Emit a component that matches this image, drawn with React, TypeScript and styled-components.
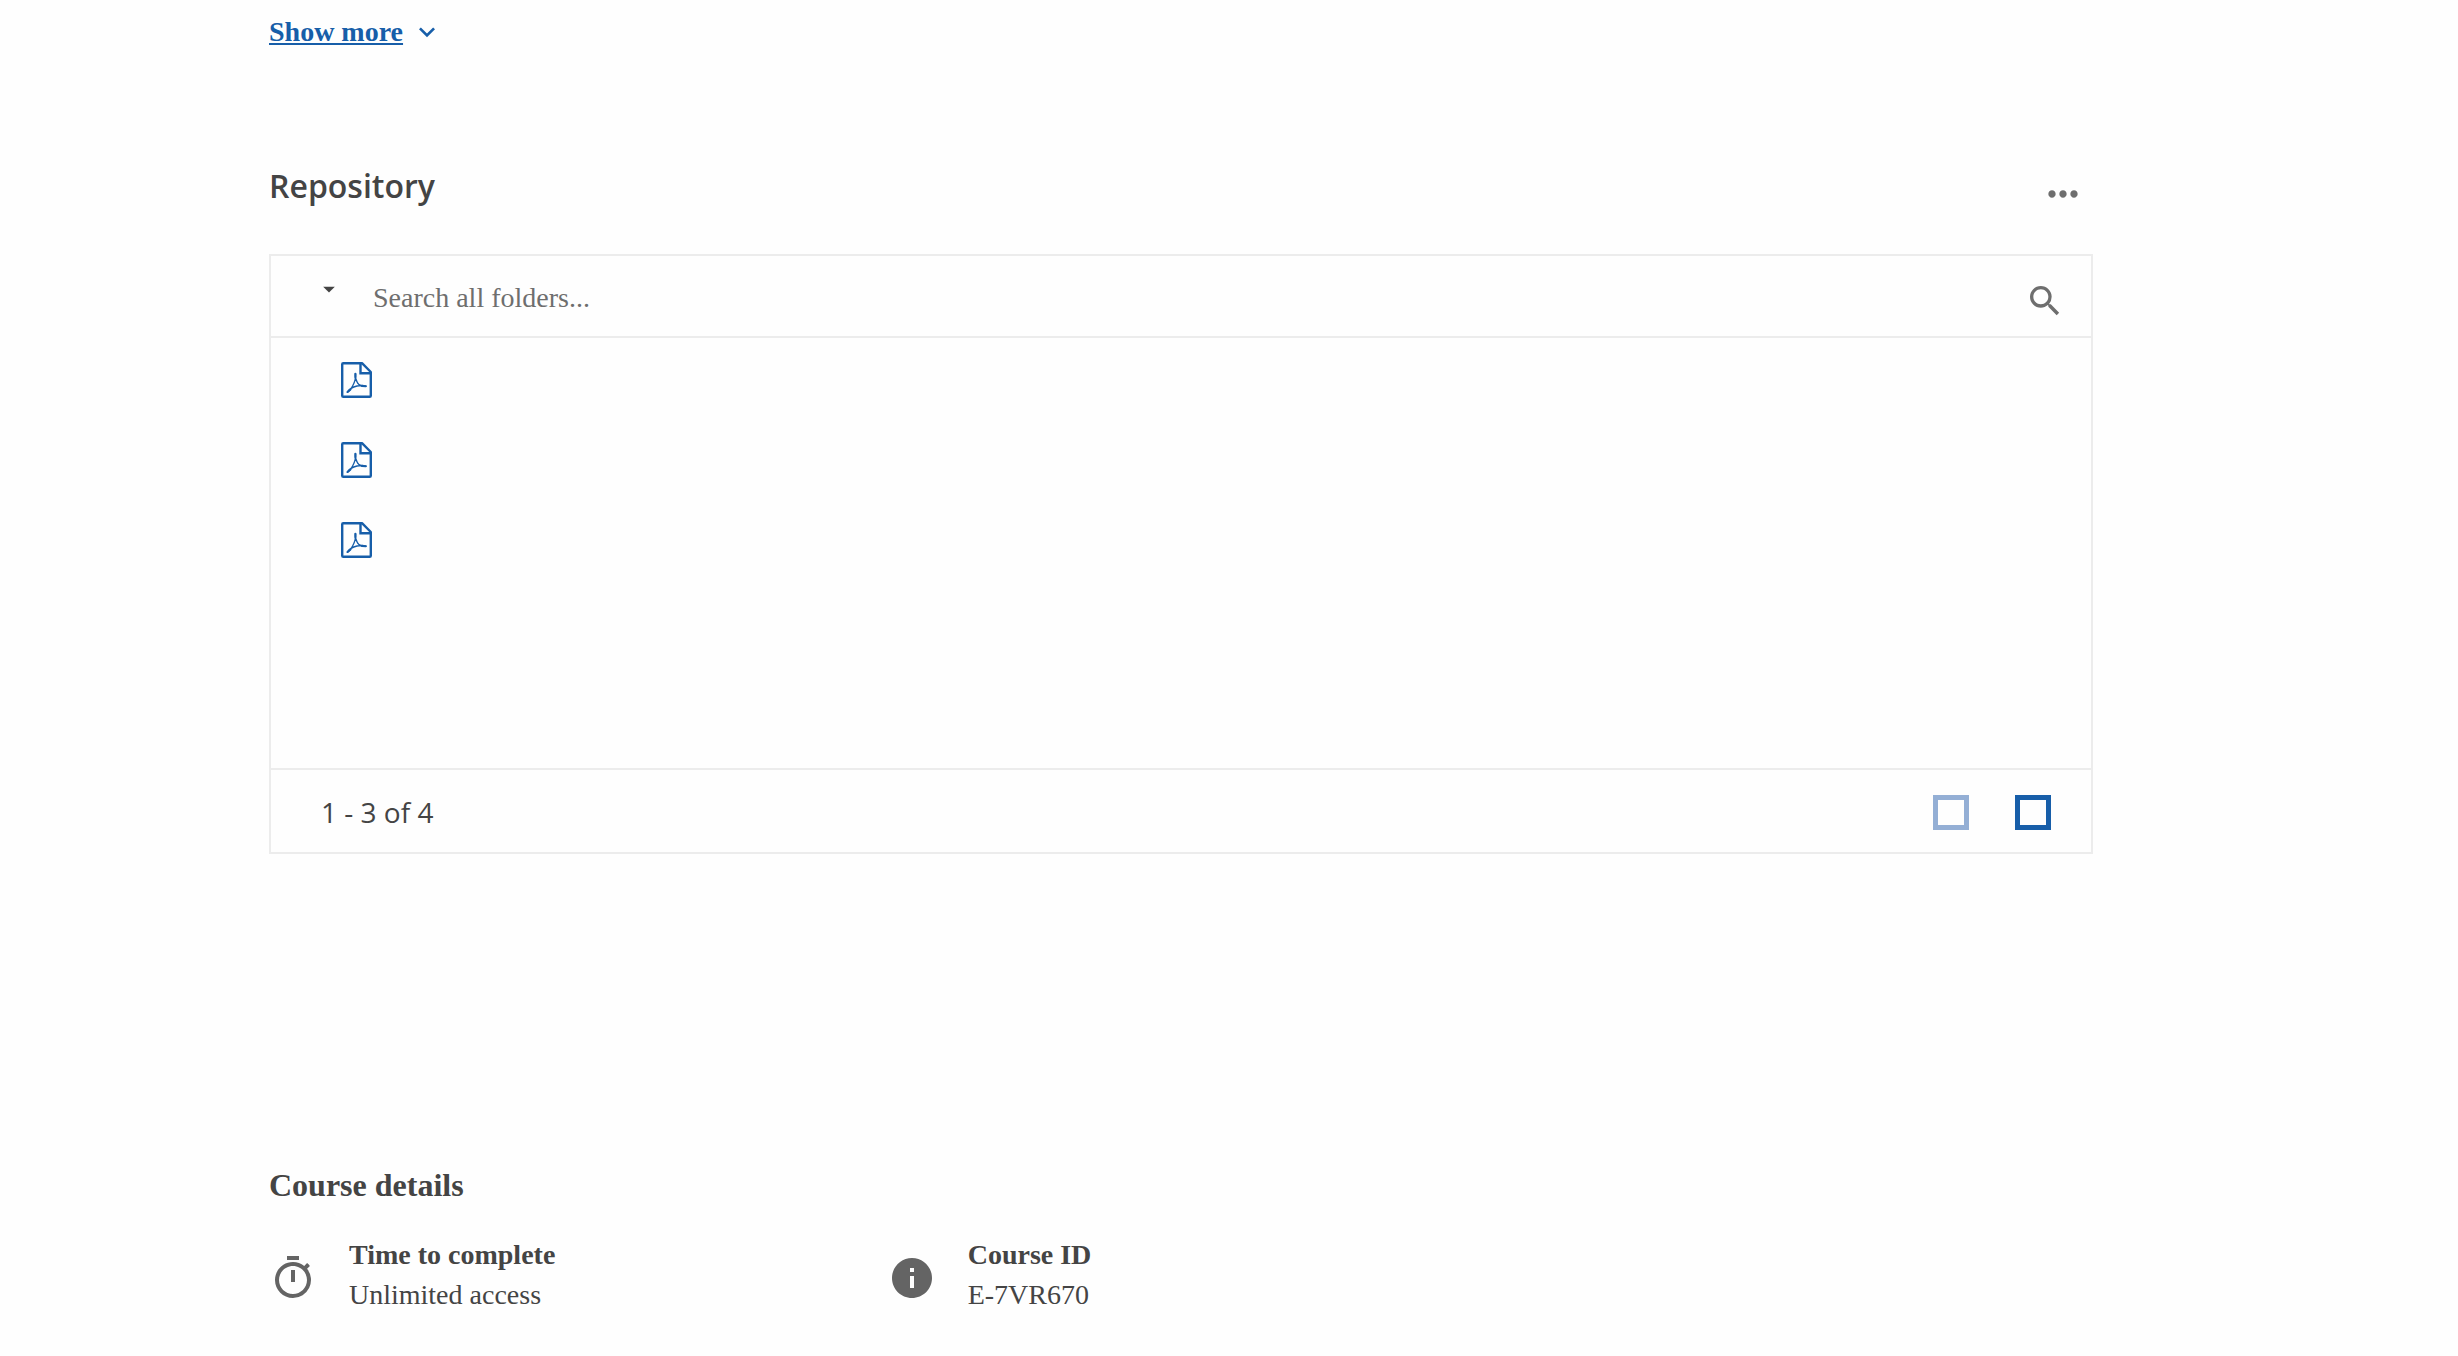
import React from 'react';
import styled, { createGlobalStyle } from 'styled-components';

const serif = '"Liberation Serif", "Times New Roman", serif';
const sans = '"Open Sans", "Noto Sans", sans-serif';
const ink = '#444444';
const muted = '#6e6e6e';
const blue = '#175ea9';
const line = '#ececec';

const GlobalStyle = createGlobalStyle`
  *, *::before, *::after { box-sizing: border-box; }
  body { margin: 0; background: #fefefe; color: ${ink}; font: 28px/40px ${serif}; }
  svg { display: block; }
`;

const Page = styled.main`
  padding: 12px 365px 32px 269px;
`;

const IconButton = styled.button`
  display: flex;
  flex: none;
  padding: 0;
  border: 0;
  background: none;
  color: ${muted};
  cursor: pointer;
`;

const ShowMore = styled.button`
  display: flex;
  align-items: center;
  gap: 8px;
  padding: 0;
  border: 0;
  background: none;
  color: ${blue};
  font: bold 28px/40px ${serif};
  cursor: pointer;
`;

const ShowMoreLabel = styled.span`
  text-decoration: underline;
  text-decoration-thickness: 2px;
  text-underline-offset: 2px;
`;

const SectionHeader = styled.header`
  display: flex;
  align-items: center;
  justify-content: space-between;
  margin-top: 104px;
  padding-right: 8px;
`;

const SectionTitle = styled.h2`
  margin: 0;
  font: 600 32px/44px ${sans};
`;

const MenuButton = styled(IconButton)`
  padding-top: 16px;
`;

const Card = styled.div`
  margin-top: 38px;
  border: 2px solid ${line};
`;

const SearchBar = styled.form`
  display: flex;
  align-items: center;
  height: 82px;
  padding: 4px 26px 0 44px;
  border-bottom: 2px solid ${line};
`;

const FolderButton = styled(IconButton)`
  width: 58px;
  height: 46px;
  color: ${ink};
`;

const SearchInput = styled.input`
  flex: 1;
  min-width: 0;
  padding: 0;
  border: 0;
  outline: 0;
  background: none;
  color: ${ink};
  font: 28px/40px ${serif};
  &::placeholder { color: ${muted}; opacity: 1; }
`;

const SearchButton = styled(IconButton)`
  padding-top: 6px;
`;

const FileList = styled.ul`
  min-height: 430px;
  margin: 0;
  padding: 2px 0 0 70px;
  list-style: none;
`;

const FileRow = styled.li`
  display: flex;
  align-items: center;
  height: 80px;
`;

const FileLink = styled.a`
  color: ${blue};
`;

const CardFooter = styled.footer`
  display: flex;
  align-items: center;
  justify-content: space-between;
  height: 84px;
  padding: 2px 40px 0 50px;
  border-top: 2px solid ${line};
  font: 28px/40px ${sans};
`;

const Pager = styled.nav`
  display: flex;
  gap: 46px;
`;

const PageButton = styled.button`
  width: 36px;
  height: 35px;
  padding: 0;
  border: 5px solid ${blue};
  background: none;
  cursor: pointer;
  &:disabled { border-color: #94afd5; cursor: default; }
`;

const Details = styled.section`
  margin-top: 311px;
`;

const DetailsTitle = styled.h2`
  margin: 0;
  font: bold 32px/40px ${serif};
`;

const DetailsGrid = styled.dl`
  display: grid;
  grid-template-columns: repeat(3, 1fr);
  gap: 32px;
  margin: 30px 0 0;
`;

const Detail = styled.div`
  display: grid;
  grid-template-columns: 48px 1fr;
  align-items: center;
  column-gap: 32px;
`;

const DetailIcon = styled.span`
  grid-row: span 2;
  padding-top: 6px;
  color: #646464;
`;

const DetailName = styled.dt`
  font-weight: bold;
`;

const DetailValue = styled.dd`
  margin: 0;
`;

function Glyph({ size, d }: { size: number; d: string }) {
  return (
    <svg width={size} height={size} viewBox="0 0 24 24" fill="currentColor" aria-hidden="true">
      <path d={d} />
    </svg>
  );
}

const paths = {
  chevron: 'M16.59 8.59 12 13.17 7.41 8.59 6 10l6 6 6-6z',
  more: 'M6 10c-1.1 0-2 .9-2 2s.9 2 2 2 2-.9 2-2-.9-2-2-2zm12 0c-1.1 0-2 .9-2 2s.9 2 2 2 2-.9 2-2-.9-2-2-2zm-6 0c-1.1 0-2 .9-2 2s.9 2 2 2 2-.9 2-2-.9-2-2-2z',
  caret: 'M7 10l5 5 5-5z',
  search: 'M15.5 14h-.79l-.28-.27A6.471 6.471 0 0 0 16 9.5 6.5 6.5 0 1 0 9.5 16c1.61 0 3.09-.59 4.23-1.57l.27.28v.79l5 4.99L20.49 19l-4.99-5zm-6 0C7.01 14 5 11.99 5 9.5S7.01 5 9.5 5 14 7.01 14 9.5 11.99 14 9.5 14z',
  timer: 'M15 1H9v2h6V1zm-4 13h2V8h-2v6zm8.03-6.61 1.42-1.42c-.43-.51-.9-.99-1.41-1.41l-1.42 1.42A8.962 8.962 0 0 0 12 4c-4.97 0-9 4.03-9 9s4.02 9 9 9a8.994 8.994 0 0 0 7.03-14.61zM12 20c-3.87 0-7-3.13-7-7s3.13-7 7-7 7 3.13 7 7-3.13 7-7 7z',
  info: 'M12 2C6.48 2 2 6.48 2 12s4.48 10 10 10 10-4.48 10-10S17.52 2 12 2zm1 15h-2v-6h2v6zm0-8h-2V7h2v2z',
};

function PdfIcon() {
  return (
    <svg width="31" height="36" viewBox="0 0 31 36" fill="none" stroke="currentColor" aria-hidden="true">
      <path d="M2.2 1.2H21L29.8 10V33.7Q29.8 34.8 28.7 34.8H2.3Q1.2 34.8 1.2 33.7V2.3Q1.2 1.2 2.2 1.2Z" strokeWidth="2.4" strokeLinejoin="round" />
      <path d="M19.5 1.5V11.3H29.5" strokeWidth="2.4" />
      <path d="M14.4 11.6C14 15 14.8 18.2 16.6 21C18.2 23.2 21.6 24.9 25 24.2M14.6 11.8C15 16.6 13.6 20.4 11.6 24C10.2 26.8 8.5 29.2 6.3 30.2M6.3 30.2C8 27.4 12 25 16 24C19 23.3 22.5 23.5 25 24.1" strokeWidth="1.3" strokeLinecap="round" />
      <path d="M14.4 11.8V15.5M6.6 30L9.4 27.4M21 23.9L24.8 24.2" strokeWidth="2.1" strokeLinecap="round" />
    </svg>
  );
}

const files = ['PDF document 1', 'PDF document 2', 'PDF document 3'];

const details = [
  { name: 'Time to complete', value: 'Unlimited access', icon: paths.timer },
  { name: 'Course ID', value: 'E-7VR670', icon: paths.info },
];

export default function App() {
  return (
    <>
      <GlobalStyle />
      <Page>
        <ShowMore type="button">
          <ShowMoreLabel>Show more</ShowMoreLabel>
          <Glyph size={32} d={paths.chevron} />
        </ShowMore>

        <section>
          <SectionHeader>
            <SectionTitle>Repository</SectionTitle>
            <MenuButton type="button" aria-label="More options">
              <Glyph size={44} d={paths.more} />
            </MenuButton>
          </SectionHeader>

          <Card>
            <SearchBar role="search" onSubmit={(event) => event.preventDefault()}>
              <FolderButton type="button" aria-label="Choose folder">
                <Glyph size={28} d={paths.caret} />
              </FolderButton>
              <SearchInput type="text" aria-label="Search all folders" placeholder="Search all folders..." />
              <SearchButton type="submit" aria-label="Search">
                <Glyph size={40} d={paths.search} />
              </SearchButton>
            </SearchBar>
            <FileList>
              {files.map((file) => (
                <FileRow key={file}>
                  <FileLink href="#" aria-label={file}>
                    <PdfIcon />
                  </FileLink>
                </FileRow>
              ))}
            </FileList>
            <CardFooter>
              <span>1 - 3 of 4</span>
              <Pager aria-label="Pages">
                <PageButton type="button" aria-label="Previous page" disabled />
                <PageButton type="button" aria-label="Next page" />
              </Pager>
            </CardFooter>
          </Card>
        </section>

        <Details>
          <DetailsTitle>Course details</DetailsTitle>
          <DetailsGrid>
            {details.map((item) => (
              <Detail key={item.name}>
                <DetailIcon>
                  <Glyph size={48} d={item.icon} />
                </DetailIcon>
                <DetailName>{item.name}</DetailName>
                <DetailValue>{item.value}</DetailValue>
              </Detail>
            ))}
          </DetailsGrid>
        </Details>
      </Page>
    </>
  );
}
